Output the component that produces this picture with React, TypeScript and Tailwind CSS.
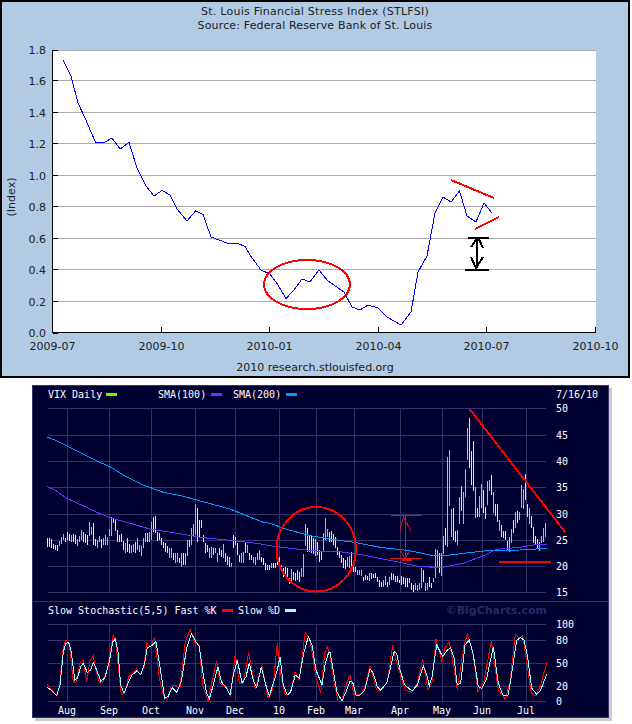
type Pt = [number, number];
type Bar = [number, number, "c" | "g"];

// readings are taken in zoomed (3x) pixels, these put them back on the page
const toPoints = (pts: Pt[], ox: number, oy: number) =>
  pts.map(([x, y]) => `${(ox + x / 3).toFixed(1)},${(oy + y / 3).toFixed(1)}`).join(" ");

const FSI: Pt[] = [
  [63, 60], [71, 76], [78, 103], [85, 118], [91, 132], [96, 143], [105, 142], [112, 138], [120, 149], [129, 142.5],
  [137, 168], [146, 186], [154, 196], [162, 190.5], [170, 195], [177, 209], [187, 221], [195.5, 211], [203, 214.5],
  [211, 237], [227, 243], [237, 243], [245, 246.5], [252, 258], [261, 270], [270, 274], [278, 285], [286, 298.5],
  [294, 290], [302, 279], [310, 282], [319, 270], [328, 281], [344, 292], [352, 307], [360, 310], [368, 305],
  [378, 308], [387, 317], [401, 325], [411, 312], [418, 272], [427, 256], [435, 213], [443, 197], [451, 202],
  [459.5, 191], [467, 216], [476, 222], [484, 203], [492, 213],
];

const FSI_TICKS: [string, number][] = [
  ["1.8", 50], ["1.6", 80.5], ["1.4", 112.5], ["1.2", 143.5], ["1.0", 175.5],
  ["0.8", 206.5], ["0.6", 238.5], ["0.4", 269.5], ["0.2", 301.5], ["0.0", 333],
];

const FSI_DATES: [string, number][] = [
  ["2009-07", 52.5], ["2009-10", 161.5], ["2010-01", 269.5], ["2010-04", 378.5], ["2010-07", 486.5], ["2010-10", 595.5],
];

const VIX_A: Bar[] = [
  [458, 485, "c"], [460, 485, "c"], [462, 488, "c"], [478, 493, "c"], [480, 495, "c"], [480, 498, "c"], [468, 483, "g"], [456, 478, "g"],
  [448, 465, "g"], [458, 470, "c"], [442, 465, "c"], [448, 468, "c"], [450, 470, "g"], [446, 472, "c"], [450, 478, "c"], [462, 482, "g"],
  [452, 470, "g"], [435, 465, "g"], [440, 470, "c"], [448, 475, "c"], [450, 480, "c"], [412, 452, "g"], [425, 450, "g"], [415, 480, "c"],
  [462, 482, "c"], [465, 488, "g"], [452, 470, "g"], [462, 488, "c"], [458, 480, "g"], [450, 480, "g"], [455, 480, "g"], [432, 452, "g"],
  [395, 452, "g"], [398, 415, "c"], [402, 438, "c"], [435, 470, "c"], [450, 470, "c"], [448, 470, "c"], [468, 495, "c"], [475, 505, "g"],
  [460, 500, "c"], [478, 503, "c"], [480, 505, "g"], [478, 500, "g"], [472, 503, "c"], [458, 495, "g"], [480, 500, "g"], [482, 512, "g"],
  [460, 490, "g"], [445, 470, "g"], [445, 470, "c"], [440, 472, "g"], [412, 465, "g"], [395, 440, "c"], [393, 445, "c"], [440, 468, "c"],
  [445, 465, "c"], [460, 480, "c"], [470, 488, "c"], [475, 500, "c"], [483, 503, "c"], [490, 520, "g"], [490, 520, "g"], [505, 525, "c"],
  [505, 535, "g"], [505, 530, "g"], [520, 535, "c"], [505, 545, "g"], [505, 540, "c"], [503, 540, "g"], [465, 512, "g"], [465, 485, "c"],
  [430, 480, "g"], [418, 455, "g"], [358, 450, "g"], [370, 470, "c"], [405, 455, "c"], [405, 430, "c"], [450, 470, "c"], [475, 505, "c"],
  [480, 500, "c"], [490, 520, "g"], [485, 520, "g"], [490, 510, "c"], [488, 505, "g"], [505, 530, "g"], [490, 510, "c"], [495, 515, "c"],
  [478, 520, "g"], [505, 530, "c"], [512, 540, "c"], [515, 545, "c"], [535, 545, "g"], [450, 490, "c"], [455, 480, "c"], [475, 510, "c"],
  [510, 530, "c"], [505, 535, "g"], [500, 535, "g"], [475, 505, "c"], [480, 505, "g"], [505, 525, "c"], [510, 525, "c"], [515, 535, "g"],
  [515, 540, "g"], [505, 525, "g"], [495, 525, "g"], [515, 530, "c"], [520, 540, "c"], [535, 555, "c"], [540, 555, "c"], [540, 555, "c"],
  [535, 548, "g"], [535, 548, "c"], [535, 548, "c"], [515, 540, "c"],
];

const VIX_B: Bar[] = [
  [515, 540, "c"], [540, 552, "g"], [550, 575, "c"], [545, 570, "c"], [548, 578, "c"], [580, 598, "g"], [552, 590, "g"], [560, 585, "c"],
  [565, 588, "c"], [555, 585, "c"], [560, 590, "c"], [548, 575, "g"], [507, 575, "g"], [418, 482, "g"], [430, 500, "c"], [450, 500, "c"],
  [450, 505, "c"], [458, 508, "c"], [462, 512, "g"], [470, 510, "c"], [495, 530, "c"], [500, 525, "c"], [445, 502, "g"], [400, 465, "g"],
  [432, 455, "g"], [440, 470, "c"], [438, 472, "c"], [448, 480, "c"], [455, 490, "c"], [487, 510, "c"], [500, 520, "c"], [510, 535, "c"],
  [520, 550, "c"], [525, 552, "c"], [515, 545, "g"], [512, 550, "g"], [500, 550, "c"], [530, 560, "c"], [545, 560, "c"], [555, 570, "g"],
  [555, 570, "g"], [555, 572, "g"], [575, 588, "c"], [570, 585, "c"], [572, 585, "c"], [565, 588, "g"], [565, 583, "c"], [568, 580, "c"],
  [565, 580, "c"], [575, 590, "c"], [585, 605, "c"], [590, 605, "c"], [585, 605, "g"], [572, 600, "g"], [590, 605, "c"], [575, 600, "g"],
  [565, 585, "c"], [568, 585, "c"], [572, 590, "c"], [572, 590, "c"], [585, 595, "c"], [572, 600, "c"], [575, 598, "c"], [580, 607, "c"],
  [580, 607, "c"], [578, 595, "c"], [595, 615, "c"], [600, 620, "c"], [595, 615, "g"], [600, 618, "g"], [595, 615, "g"], [550, 610, "g"],
  [555, 590, "c"], [595, 618, "g"], [595, 615, "g"], [575, 605, "c"], [595, 610, "c"], [580, 590, "g"],
];

const VIX_C: Bar[] = [
  [492, 578, "g"], [495, 550, "g"], [505, 565, "c"], [505, 572, "g"], [452, 507, "g"], [430, 480, "c"], [216, 485, "g"], [195, 362, "g"],
  [372, 455, "g"], [370, 465, "c"], [438, 470, "c"], [435, 480, "g"], [335, 418, "g"], [303, 378, "c"], [320, 418, "g"], [252, 335, "g"],
  [128, 225, "g"], [98, 248, "c"], [198, 300, "c"], [168, 317, "c"], [305, 398, "g"], [368, 395, "c"], [333, 395, "g"], [297, 368, "g"],
  [315, 385, "c"], [365, 402, "c"], [288, 360, "g"], [285, 318, "g"], [270, 330, "c"], [320, 385, "g"], [357, 393, "c"], [357, 410, "c"],
  [405, 438, "g"], [420, 455, "c"], [437, 460, "c"], [437, 465, "c"], [468, 495, "c"], [455, 500, "g"], [432, 475, "g"], [405, 445, "c"],
  [380, 430, "g"], [378, 415, "c"], [382, 405, "g"], [300, 368, "g"], [312, 372, "g"], [267, 345, "c"], [358, 395, "c"], [370, 418, "g"],
  [392, 430, "c"], [425, 475, "c"], [452, 480, "c"], [462, 490, "c"], [470, 497, "g"], [452, 475, "g"], [430, 470, "g"], [413, 455, "g"],
];

const SEGMENTS: [Bar[], number][] = [[VIX_A, 47], [VIX_B, 279], [VIX_C, 435]];

const SMA200 =
  toPoints([[52, 157], [70, 163], [110, 183], [160, 208], [200, 228], [240, 245], [280, 270], [340, 300], [400, 322], [460, 334], [500, 345], [600, 372], [700, 412]], 30, 385) +
  " " + toPoints([[0, 415], [50, 433], [120, 452], [200, 465], [260, 473], [330, 487], [420, 497], [480, 510]], 270, 385) +
  " " + toPoints([[30, 510], [90, 510], [130, 505], [200, 497], [300, 495], [380, 490]], 420, 385);

const SMA100 =
  toPoints([[52, 305], [75, 315], [110, 340], [150, 358], [200, 382], [240, 398], [300, 415], [360, 432], [440, 445], [520, 458], [600, 466], [680, 475]], 30, 385) +
  " " + toPoints([[0, 482], [60, 490], [140, 498], [210, 500], [280, 510], [380, 530], [440, 543], [500, 548]], 270, 385) +
  " " + toPoints([[30, 545], [60, 548], [130, 535], [190, 512], [230, 493], [300, 487], [340, 480], [380, 478]], 420, 385);

const D_LEFT: Pt[] = [
  [52, 278], [64, 285], [80, 302], [90, 270], [100, 170], [108, 145], [116, 142], [124, 170], [134, 255], [142, 250], [152, 215], [160, 205], [172, 232], [182, 225], [190, 202],
  [200, 225], [212, 258], [224, 250], [238, 200], [248, 140], [256, 132], [264, 170], [272, 270], [282, 295], [294, 265], [306, 240], [320, 228], [332, 240], [344, 205], [352, 158],
  [366, 152], [378, 140], [392, 230], [404, 310], [414, 305], [426, 278], [440, 292], [454, 258], [470, 160], [484, 116], [498, 140], [508, 155], [520, 240], [530, 295], [538, 312],
  [550, 270], [564, 215], [574, 260], [590, 280], [600, 300], [610, 240], [622, 195], [636, 265], [648, 245], [658, 205], [670, 255], [680, 278], [694, 215], [706, 265], [718, 303],
  [730, 265], [742, 225], [750, 185], [760, 270], [772, 300], [782, 290], [796, 240], [808, 250], [820, 180], [835, 125], [846, 150], [858, 225], [876, 270], [886, 205], [896, 172],
];
const D_RIGHT: Pt[] = [
  [0, 172], [8, 215], [20, 290], [36, 318], [48, 290], [60, 258], [68, 262], [78, 300], [90, 300], [104, 285], [120, 222], [130, 235], [142, 275], [152, 285], [170, 265], [180, 225],
  [192, 170], [200, 175], [210, 225], [224, 270], [246, 288], [262, 270], [280, 212], [290, 240], [298, 272], [306, 245], [320, 150], [338, 185], [352, 165], [362, 158], [372, 190],
  [382, 270], [392, 265], [405, 150], [418, 135], [430, 180], [445, 275], [455, 280], [470, 250], [490, 155], [505, 265], [520, 303], [535, 300], [548, 215], [560, 135], [572, 128],
  [582, 135], [592, 180], [605, 280], [620, 298], [632, 285], [650, 238],
];
const K_LEFT: Pt[] = [
  [52, 268], [60, 280], [78, 300], [88, 280], [100, 155], [108, 135], [118, 145], [130, 262], [138, 262], [150, 205], [160, 195], [170, 262], [180, 198], [190, 182], [195, 215],
  [208, 262], [220, 260], [234, 215], [250, 118], [258, 150], [274, 300], [284, 295], [296, 245], [306, 235], [320, 220], [330, 240], [342, 215], [350, 145], [362, 155], [374, 128],
  [388, 250], [404, 312], [414, 310], [424, 272], [436, 272], [450, 275], [466, 140], [480, 103], [496, 145], [508, 150], [518, 270], [534, 317], [548, 250], [560, 198], [570, 265],
  [590, 278], [602, 305], [616, 175], [628, 265], [640, 265], [656, 172], [676, 282], [696, 212], [714, 308], [728, 285], [742, 145], [752, 240], [766, 300], [780, 295], [795, 232],
  [808, 255], [826, 112], [840, 135], [858, 245], [872, 295], [884, 175], [892, 155],
];
const K_RIGHT: Pt[] = [
  [0, 178], [10, 250], [24, 318], [34, 320], [50, 265], [60, 240], [72, 300], [90, 298], [104, 280], [120, 213], [140, 285], [152, 287], [172, 260], [188, 150], [198, 195], [210, 235],
  [226, 285], [246, 292], [262, 265], [278, 192], [294, 285], [306, 260], [318, 132], [336, 200], [344, 160], [358, 140], [372, 220], [382, 285], [402, 150], [412, 118], [428, 170],
  [444, 290], [462, 258], [484, 138], [505, 285], [526, 313], [540, 260], [556, 118], [568, 130], [578, 122], [590, 200], [604, 295], [618, 303], [632, 270], [650, 202],
];

const MONTHS: [string, number][] = [
  ["Aug", 67], ["Sep", 109], ["Oct", 151], ["Nov", 195], ["Dec", 235], ["10", 279],
  ["Feb", 316], ["Mar", 354], ["Apr", 400], ["May", 442], ["Jun", 482], ["Jul", 526],
];
const VERTICALS = MONTHS.map((m) => m[1] + 0.5);
const VIX_ROWS: [string, number][] = [
  ["50", 408], ["45", 435], ["40", 461], ["35", 487], ["30", 514], ["25", 540], ["20", 566], ["15", 592],
];
const STOCH_ROWS: [string, number][] = [["100", 624], ["80", 640], ["50", 663], ["20", 686], ["0", 701]];

const GRID = "#33336b";

function FsiChart() {
  return (
    <svg viewBox="2 42 626 319" className="block h-[319px] w-[626px] font-['DejaVu_Sans'] text-[11px]">
      <g shapeRendering="crispEdges">
        <rect x="53" y="50" width="543" height="283" fill="#fff" />
        {FSI_TICKS.slice(0, 9).map(([label, y]) => (
          <path key={label} d={`M53 ${y}H596`} stroke="#aaa" />
        ))}
        {FSI_TICKS.map(([label, y]) => (
          <path key={label} d={`M53 ${y}H58`} stroke="#000" />
        ))}
        {FSI_DATES.slice(1).map(([label, x]) => (
          <path key={label} d={`M${x} 327V333`} stroke="#000" />
        ))}
        <path d="M52.5 50V332.5H596" fill="none" stroke="#000" />
        <polyline points={FSI.map((p) => p.join(",")).join(" ")} fill="none" stroke="#0000ff" />
        <ellipse cx="307" cy="284.5" rx="43" ry="24.5" fill="none" stroke="#ff0000" strokeWidth="2" />
        <path d="M451 180L494 198M475 229L499 217" stroke="#ff0000" strokeWidth="2" />
        <path d="M468 237.5H489M465 269.5H489M476.5 237V268M478 237L471 247M478 237L483 248M471 257L476 268L483 257" fill="none" stroke="#000" strokeWidth="2" />
      </g>
      {FSI_TICKS.map(([label, y]) => (
        <text key={label} x="46" y={y + 4} textAnchor="end" fill="#222">{label}</text>
      ))}
      {FSI_DATES.map(([label, x]) => (
        <text key={label} x={x} y="350" textAnchor="middle" fill="#222">{label}</text>
      ))}
      <text transform="translate(15 197) rotate(-90)" textAnchor="middle" fill="#222">(Index)</text>
    </svg>
  );
}

function VixChart() {
  return (
    <svg viewBox="33 386 575 215" className="block h-[215px] w-[575px] font-['DejaVu_Sans_Mono'] text-[10px]">
      <g shapeRendering="crispEdges">
        {VIX_ROWS.map(([label, y]) => (
          <path key={label} d={`M48 ${y + 0.5}H546`} stroke={GRID} />
        ))}
        {VERTICALS.map((x) => (
          <path key={x} d={`M${x} 408V592`} stroke={GRID} />
        ))}
        {SEGMENTS.flatMap(([bars, startX]) =>
          bars.map(([top, bottom, kind], i) => (
            <rect
              key={`${startX}-${i}`}
              x={startX + i * 2}
              y={385 + top / 3}
              width="1"
              height={(bottom - top) / 3}
              fill={kind === "g" ? "#77ff00" : "#aaffff"}
            />
          ))
        )}
        <polyline points={SMA200} fill="none" stroke="#0099ff" />
        <polyline points={SMA100} fill="none" stroke="#6633ff" />
        <rect x="106" y="393" width="11" height="3" fill="#66ff00" />
        <rect x="211" y="393" width="11" height="3" fill="#6633ff" />
        <rect x="286" y="393" width="11" height="3" fill="#0099ff" />
        <path d="M469 408.3L565.3 532.3" stroke="#ff0000" strokeWidth="2" />
        <path d="M499 562.3H551" stroke="#ff0000" strokeWidth="2" />
        <path d="M391 515H422M405.5 515V560M404 515L400 530M404 518L411 531M400 549L405 559L410 550M390 558.5H422" fill="none" stroke="#dd1111" />
        <path d="M402 559.5H412" stroke="#dd1111" strokeWidth="2" />
        <ellipse cx="316.3" cy="549.3" rx="39.7" ry="42.3" fill="none" stroke="#ff0000" strokeWidth="2" />
      </g>
      <g fill="#fff">
        <text x="48" y="398">VIX Daily</text>
        <text x="158" y="398">SMA(100)</text>
        <text x="233" y="398">SMA(200)</text>
        <text x="556" y="398">7/16/10</text>
        {VIX_ROWS.map(([label, y]) => (
          <text key={label} x="556" y={y + 4}>{label}</text>
        ))}
      </g>
    </svg>
  );
}

function StochChart() {
  return (
    <svg viewBox="33 602 575 115" className="block h-[115px] w-[575px] font-['DejaVu_Sans_Mono'] text-[10px]">
      <g shapeRendering="crispEdges">
        {STOCH_ROWS.map(([label, y]) => (
          <path key={label} d={`M48 ${y + 0.5}H546`} stroke={GRID} />
        ))}
        {VERTICALS.map((x) => (
          <path key={x} d={`M${x} 624V702`} stroke={GRID} />
        ))}
        <polyline points={toPoints(K_LEFT, 30, 595) + " " + toPoints(K_RIGHT, 330, 595)} fill="none" stroke="#ff0000" />
        <polyline points={toPoints(D_LEFT, 30, 595) + " " + toPoints(D_RIGHT, 330, 595)} fill="none" stroke="#99ffff" />
        <rect x="222" y="609" width="11" height="3" fill="#ff0000" />
        <rect x="285" y="609" width="11" height="3" fill="#99ffff" />
      </g>
      <g fill="#fff">
        <text x="48" y="614">Slow Stochastic(5,5) Fast %K</text>
        <text x="238" y="614">Slow %D</text>
        {STOCH_ROWS.map(([label, y]) => (
          <text key={label} x="556" y={y + 4}>{label}</text>
        ))}
        {MONTHS.map(([label, x]) => (
          <text key={label} x={x} y="714" textAnchor="middle">{label}</text>
        ))}
      </g>
      <text x="547" y="614" textAnchor="end" fill="#2a2a62" className="font-['DejaVu_Sans'] text-[11px] font-bold">©BigCharts.com</text>
    </svg>
  );
}

export default function App() {
  return (
    <div className="h-[724px] w-[632px] overflow-hidden bg-white">
      <section className="h-[378px] w-[630px] border-2 border-black bg-[#b1cbe4] font-['DejaVu_Sans'] text-[11px] leading-[14px] text-[#222]">
        <div className="h-[40px] pt-[3px] text-center">
          <div className="tracking-[0.25px]">St. Louis Financial Stress Index (STLFSI)</div>
          <div className="tracking-[0.15px]">Source: Federal Reserve Bank of St. Louis</div>
        </div>
        <FsiChart />
        <div className="text-center">2010 research.stlouisfed.org</div>
      </section>

      <section className="ml-[32px] mt-[7px] h-[333px] w-[577px] border border-[#33336b] bg-[#000030] shadow-[3px_3px_0_#cccccc]">
        <div className="border-b border-[#33336b]">
          <VixChart />
        </div>
        <StochChart />
      </section>
    </div>
  );
}
